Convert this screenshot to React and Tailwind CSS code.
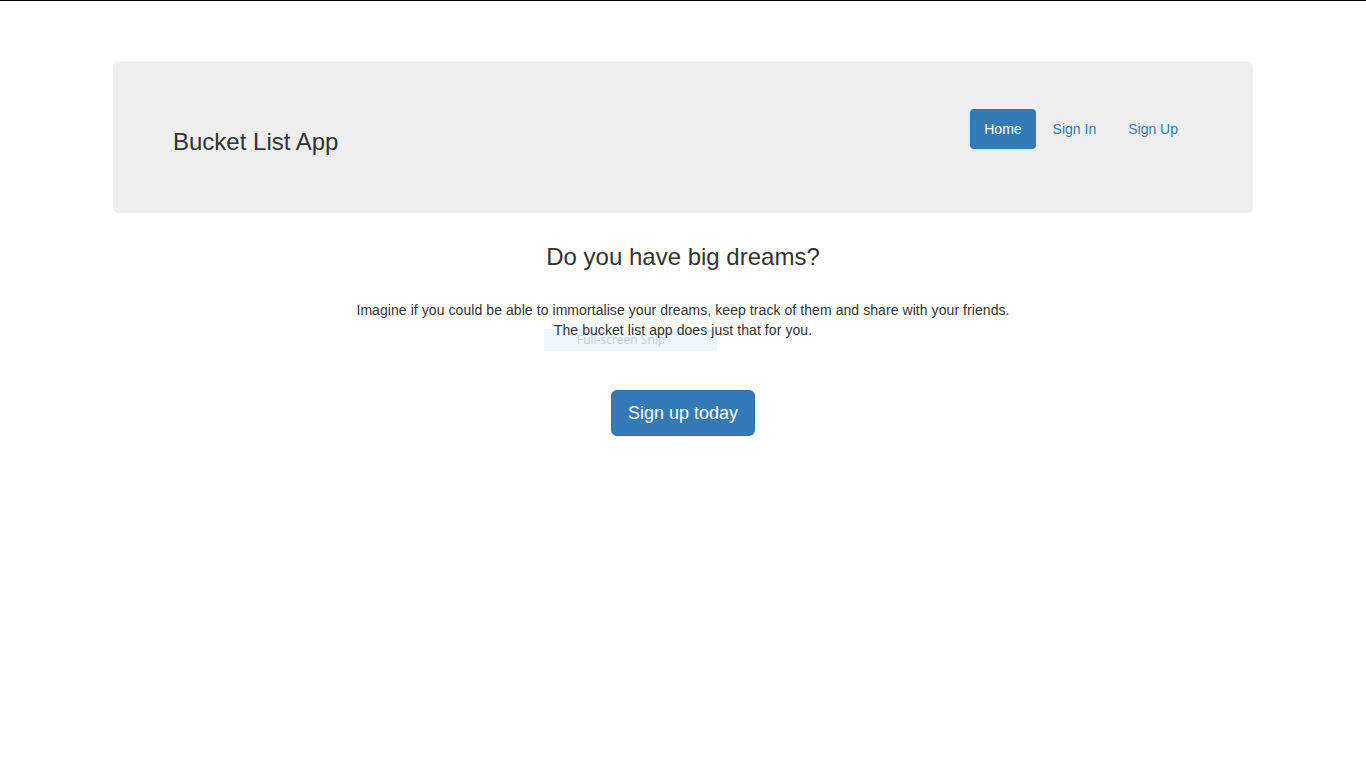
export default function App() {
  const font = { fontFamily: '"Liberation Sans", Arial, sans-serif' };
  return (
    <div className="min-h-[768px] bg-white border-t border-black text-[#333] text-[14px] leading-[20px]" style={font}>
      <div className="w-[1140px] mx-auto pt-[60px]">
        <div className="bg-[#eeeeee] rounded-[6px] h-[152px] px-[60px] pt-[48px] flex justify-between items-start">
          <h3 className="mt-[20px] text-[24px] leading-[26.4px] text-[#333]">Bucket List App</h3>
          <nav className="flex gap-[2px]">
            <a className="block px-[14px] py-[10px] rounded-[4px] bg-[#337ab7] text-white">Home</a>
            <a className="block px-[15px] py-[10px] rounded-[4px] text-[#337ab7]">Sign In</a>
            <a className="block px-[15px] py-[10px] rounded-[4px] text-[#337ab7]">Sign Up</a>
          </nav>
        </div>
        <div className="relative flex flex-col items-center text-center">
          <h1 className="mt-[31px] text-[24px] leading-[26.4px] text-[#333]">Do you have big dreams?</h1>
          <div className="absolute left-[calc(50%-139px)] top-[116px] w-[173px] h-[22px] bg-[#f0f6fd] text-[#c8ccd2] text-[12px] leading-[22px] pl-[33px] text-left" style={{ fontFamily: '"Open Sans", sans-serif' }}>
            Full-screen Snip
          </div>
          <p className="relative mt-[30px] text-[14px] leading-[20px] text-[#333] tracking-[0.07px]">
            Imagine if you could be able to immortalise your dreams, keep track of them and share with your friends.
            <br />
            The bucket list app does just that for you.
          </p>
          <a className="mt-[50px] block px-[16px] py-[10px] text-[18px] leading-[24px] bg-[#337ab7] border border-[#2e6da4] rounded-[6px] text-white">
            Sign up today
          </a>
        </div>
      </div>
    </div>
  );
}
